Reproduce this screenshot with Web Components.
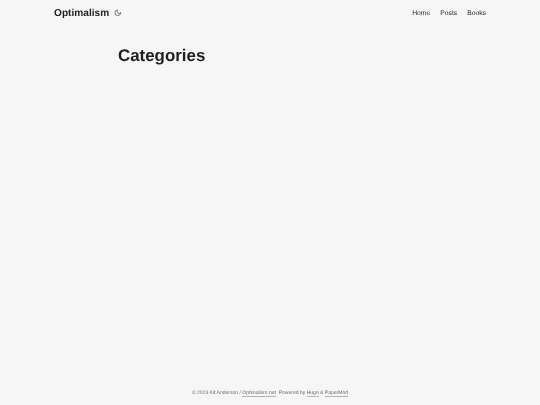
<!DOCTYPE html>
<html lang="en">
<head>
<meta charset="utf-8">
<title>Categories | Optimalism</title>
<style>
html,body{margin:0;padding:0;height:100%}
body{background:#f6f6f6;color:#1e1e1e;font-family:"Liberation Sans",Arial,sans-serif;text-rendering:geometricPrecision}
</style>
</head>
<body>
<page-shell>
  <site-header slot="header" brand="Optimalism">
    <nav-link>Home</nav-link>
    <nav-link>Posts</nav-link>
    <nav-link>Books</nav-link>
  </site-header>
  <page-title>Categories</page-title>
  <site-footer slot="footer"></site-footer>
</page-shell>
<script>
function def(name, html){
  customElements.define(name, class extends HTMLElement{
    constructor(){super();this.attachShadow({mode:"open"}).innerHTML=html(this);}
  });
}
def("page-shell",()=>`<style>
:host{display:flex;flex-direction:column;height:405px;overflow:hidden;filter:blur(.3px)}
main{flex:1;width:324px;max-width:100%;margin:0 auto;padding:0 10px;box-sizing:border-box}
</style><slot name="header"></slot><main><slot></slot></main><slot name="footer"></slot>`);
def("site-header",el=>`<style>
:host{display:flex;justify-content:space-between;align-items:center;width:432px;height:25px;margin:0 auto;font-size:6.75px}
.left{display:flex;align-items:center;gap:4.8px}
.brand{font-size:10.13px;font-weight:700;padding-top:1px}
svg{display:block;width:7.6px;height:7.6px;margin-bottom:.2px;fill:none;stroke:currentColor;stroke-width:1.7;stroke-linecap:round;stroke-linejoin:round}
.links{display:flex;gap:10.1px}
</style><div class="left"><span class="brand">${el.getAttribute("brand")}</span>
<svg viewBox="0 0 24 24" aria-hidden="true"><path d="M21 12.79A9 9 0 1 1 11.21 3 7 7 0 0 0 21 12.79z"/></svg></div>
<div class="links"><slot></slot></div>`);
def("nav-link",()=>`<style>:host{display:block;line-height:10px;padding-top:2px}</style><slot></slot>`);
def("page-title",()=>`<style>:host{display:block;margin-top:20px;font-size:16.9px;line-height:21px;font-weight:700}</style><slot></slot>`);
def("site-footer",()=>`<style>
:host{display:block;height:15.5px;font-size:5.04px;line-height:7px;text-align:center;color:#6c6c6c}
span{border-bottom:.3px solid #b4b4b4}
</style>© 2023 Kit Anderson / <span>Optimalism.net</span>&nbsp; Powered by <span>Hugo</span> &amp; <span>PaperMod</span>`);
</script>
</body>
</html>
